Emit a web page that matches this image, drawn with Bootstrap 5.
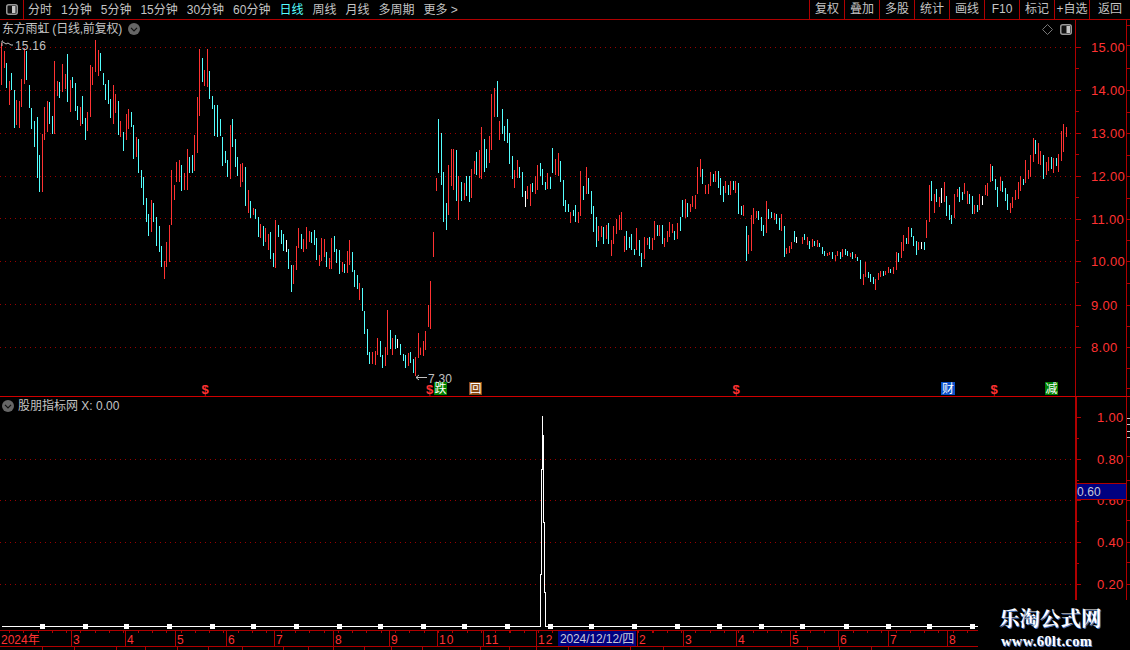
<!DOCTYPE html>
<html lang="zh">
<head>
<meta charset="utf-8">
<title>东方雨虹 日线</title>
<link href="https://cdn.jsdelivr.net/npm/bootstrap@5.3.0/dist/css/bootstrap.min.css" rel="stylesheet">
<style>
html,body{background:#000;margin:0;height:650px;overflow:hidden}
body{font-family:"Liberation Sans","Noto Sans CJK SC",sans-serif;font-size:12px;color:#c4c4c4;line-height:1;width:1130px;position:relative}
.tbar{height:20px;border-bottom:1px solid #b00000}
.tbar-icon{width:24px;border-right:1px solid #b00000}
.tbar-menu{gap:9px;padding-left:4px}
.tbar-on{color:#55ffff}
.tbar-cell{width:35px;border-left:1px solid #b00000;text-align:center;height:19px;line-height:19px}
.tbar-cell:last-child{width:41px}
.pane{position:relative;display:block}
.pane svg{display:block}
.pane-head{position:absolute;left:0;top:0;height:18px;gap:6px;padding-left:2px}
.pane-title{letter-spacing:-.2px}
.pane-low .pane-head{padding-left:2px;top:0;gap:4px}
.cgl{width:12px;height:12px;display:block}
.pane-tools{position:absolute;top:4px;left:1042px;gap:7px}
.xaxis{height:17px;width:978px;border-top:1px solid #b00000;border-bottom:1px solid #b00000;position:relative;overflow:hidden;background:#000 repeating-linear-gradient(90deg,#b00000 0 1px,transparent 1px 14.3px) 9px 0/100% 2px no-repeat}
.xcell{color:#ff3232;border-left:1px solid #b00000;padding:3px 0 0 1px;font-size:12px;letter-spacing:1px;height:15px;flex:none}
.xcell:first-child{border-left:0;padding-left:1px;letter-spacing:0}
.xdate{position:absolute;left:558px;top:0;width:78px;height:15px;background:#000080;color:#c8c8d8;font-size:12px;padding-top:2px;text-align:center;white-space:nowrap;letter-spacing:-.1px}
.stat{height:3px;width:978px;overflow:hidden}
.stat-cell{border-left:1px solid #b00000;height:3px;flex:none;overflow:hidden}
.logo{position:absolute;left:978px;top:600px;width:152px;height:50px;background:#000;padding-top:8px;padding-left:21px;font-family:"Liberation Serif","Noto Serif CJK SC","Noto Sans CJK SC",serif;color:#fff;font-weight:700}
.logo-a{font-size:20.5px;text-shadow:1px 1px 0 #4a78c8;line-height:23px;white-space:nowrap}
.logo-b{font-size:14.5px;letter-spacing:.35px;text-shadow:1px 1px 0 #4a78c8;line-height:16px;padding-top:2px;padding-left:2px;white-space:nowrap}
</style>
</head>
<body>
<div class="tbar d-flex">
  <div class="tbar-icon d-flex align-items-center justify-content-center">
    <svg width="12" height="11" viewBox="0 0 12 11"><rect x=".75" y=".75" width="10.5" height="9.5" rx="2" fill="#111" stroke="#999" stroke-width="1.5"/><rect x="6" y="2" width="3.5" height="7" fill="#c8c8c8"/></svg>
  </div>
  <div class="tbar-menu d-flex align-items-center flex-grow-1">
    <span>分时</span><span>1分钟</span><span>5分钟</span><span>15分钟</span><span>30分钟</span><span>60分钟</span><span class="tbar-on">日线</span><span>周线</span><span>月线</span><span>多周期</span><span>更多 &gt;</span>
  </div>
  <div class="d-flex">
    <div class="tbar-cell">复权</div><div class="tbar-cell">叠加</div><div class="tbar-cell">多股</div><div class="tbar-cell">统计</div><div class="tbar-cell">画线</div><div class="tbar-cell">F10</div><div class="tbar-cell">标记</div><div class="tbar-cell">+自选</div><div class="tbar-cell">返回</div>
  </div>
</div>

<div class="pane">
  <svg id="up" width="1130" height="377" viewBox="0 20 1130 377"></svg>
  <div class="pane-head d-flex align-items-center">
    <span class="pane-title">东方雨虹 (日线,前复权)</span>
    <svg class="cgl" viewBox="0 0 12 12"><circle cx="6" cy="6" r="6" fill="#666"/><path d="M3 4.8l3 3 3-3" fill="none" stroke="#111" stroke-width="1.2"/></svg>
  </div>
  <div class="pane-tools d-flex align-items-center">
    <svg width="11" height="11" viewBox="0 0 11 11"><path d="M5.5.5l5 5-5 5-5-5z" fill="none" stroke="#777"/></svg>
    <svg width="12" height="11" viewBox="0 0 12 11"><rect x=".75" y=".75" width="10.5" height="9.5" rx="2" fill="#111" stroke="#999" stroke-width="1.5"/><rect x="6.5" y="2" width="3.5" height="7" fill="#c8c8c8"/></svg>
  </div>
</div>

<div class="pane pane-low">
  <svg id="lo" width="1130" height="233" viewBox="0 397 1130 233"></svg>
  <div class="pane-head d-flex align-items-center">
    <svg class="cgl" viewBox="0 0 12 12"><circle cx="6" cy="6" r="6" fill="#666"/><path d="M3 4.8l3 3 3-3" fill="none" stroke="#111" stroke-width="1.2"/></svg>
    <span>股朋指标网 X: 0.00</span>
  </div>
</div>

<div class="xaxis d-flex" id="xa"></div>
<div class="stat d-flex" id="st"></div>

<div class="logo">
  <div class="logo-a">乐淘公式网</div>
  <div class="logo-b">www.60lt.com</div>
</div>

<script>
var NS='http://www.w3.org/2000/svg';
function el(p,n,a,t){var e=document.createElementNS(NS,n);for(var k in a)e.setAttribute(k,a[k]);if(t)e.textContent=t;p.appendChild(e);return e}
function seg(x1,y1,x2,y2,c,w){return el(up0,'line',{x1:x1,y1:y1,x2:x2,y2:y2,stroke:c,'stroke-width':w||1})}
var up0=document.getElementById('up'),lo=document.getElementById('lo');
var RED='#b00000',UPC='#ff3232',DN='#54ffff';
var S=[
[0,40,"4r10-135 13r33-85 19c68-145 28r122-195 34c98-150 43c150-264 49r180-255 58r183-264 64r117-200 73r25-133 79c33-120 88c135-205 94c204-267 103c243-321 112c231-414 118c345-456 127r282-456 133r201-300 142r183-276 148c186-252 157c228-282 163r63-282 172r123-168 178c126-174 187r72-156 196r102-147 202c42-186 211r120-216 217c111-144 226c129-213 232c198-240 241r201-258 247c168-252 256c234-300 262r216-273 271r75-231 277r81-135 286r0-96 295r30-108 301c39-93 310c99-135 316c132-180 325c120-192 331c177-234 340r135-252 346r162-219 355c183-285 361r243-291 370c276-333 379r222-300 385r207-267 394c216-261 400c255-357 409r291-351 415c297-399 424c390-444 430c411-495 439c474-546 445c522-588 454r480-576 460c489-546 469c531-618 478c558-636 484c618-681 493r663-717 499r606-681 508r555-666 514r390-555 523r435-480 529r366-426 538r360-426 544c375-453 553r399-450 562r327-450 568c351-399 577c345-399 583r285-393 592r171-339 598r27-228 607c54-126 613r90-138 622r27-141 628c93-177 637c168-207 643c195-288 652c195-291 661c237-288 667c291-378 676c333-369 682c360-411 691r255-417 697c237-321 706c297-381 712c351-408 721r372-441 727r369-426 736c381-498 745r450-519 751c483-534 760r504-526 766c507-537 775c531-591"],
[260,80,"1r432-474 10c438-498 16r444-486 25r462-510 31c456-537 40c519-561 46r420-564 55c435-471 64c450-492 70c462-513 79w480-516 85c507-567 94c555-636 100r555-612 109r498-570 115r444-504 124c462-507 130r477-516 139r441-507 148r453-486 154c456-489 163c450-495 169c474-540 178r525-558 184r474-543 193r477-531 199c516-561 208r534-567 214r474-567 223c468-516 229c507-549 238c510-582 247r546-576 253c552-579 262r513-579 268r480-555 277c516-576 283c570-621 292c585-627 298r609-660 307c624-693 313c693-762 322c747-825 328c816-852 337r816-852 346r813-855 352r774-825 361c783-831 367c825-864 376r801-858 382r690-825 391c750-807 397r774-825 406c765-807 412w777-804 421c792-825 430c822-843 436c825-864 445r819-858 451c816-849 460c837-879 466r831-888 475r759-834 481r804-825 490r783-828 496r753-810 505r675-741 511r603-747 520r456-531 529r294-333 535c117-279 544c159-315 550c276-426 559c369-450 565r255-405 574r207-318 580r207-330 589c210-363 595r288-420 604c306-363 613r309-360 619c288-348 628c288-366 634r267-354 643r243-282 649c216-285 658r210-294 664r141-297 673c177-276 679c207-264 688r168-249 694r42-210 703r24-111 712c3-111 718r123-180 727c87-162 733c138-183 742c117-189 748c159-252 757c228-297 763r270-324 772r240-294 778c261-294"],
[520,130,"7c126-201 16w183-231 22r168-207 31r162-228 37c159-186 46r138-192 52r105-180 61c99-138 67c117-165 76c156-180 82r129-177 91c141-177 97c54-129 106r87-135 115r69-138 121c93-156 130c150-228 136c210-246 145c222-246 151r246-279 160c240-258 166c225-276 175r246-279 181r123-258 190c168-210 199r111-192 205c144-192 214c183-252 220c228-306 229c261-351 235r288-333 244r288-321 250c291-342 259r285-327 265c279-342 274r330-378 280r288-342 289r267-312 298r255-300 304r246-300 313r318-366 319c303-360 328c321-354 334c312-360 343c357-375 349r294-360 358c330-378 364c369-411 373r321-387 382r324-345 388c321-357 397r324-360 403r273-330 412c285-318 418r285-318 427c285-342 433r324-351 442r303-336 448r276-321 457r282-309 463c303-330 472r279-327 481c261-303 487c210-261 496r207-264 502c219-261 511r222-246 517r198-231 526r195-237 532r111-192 541r87-141 547c117-162 556r165-192 565r162-192 571r126-168 580c132-156 586r123-156 595c123-174 601c144-195 610c168-216 616r153-189 625c165-195 631r153-195 640c153-180 646r153-189 655c159-252 664c228-255 670r225-258 679c288-393 685r315-372 694r255-363 700r234-282 709r243-264 715c243-270 724c261-303 730c285-318 739r213-309 745c237-267 754c246-264 763r249-270 769c252-282 778c264-300 784r252-303 793c288-381 799r354-372 808r348-369 814r336-357 823c303-336 829w321-339"],
[800,110,"7r381-402 13c372-390 22r381-405 28c393-417 37r387-411 43c393-408 52r390-411 58c399-411 67c411-432 73c423-438 82r429-438 88r426-435 97c426-447 106r435-453 112r423-438 121c426-447 127r417-441 136c417-435 142c423-438 151r429-441 157c426-447 166r432-444 172c441-453 181c450-507 190r492-525 196r456-501 205c486-504 211c492-516 220c501-522 226r507-540 235r489-510 241r483-501 250c483-498 256r483-495 265r471-489 271c477-489 280r471-492 289r426-480 295c429-456 304r396-444 310r375-423 319c384-402 325r351-402 334c354-381 340c378-408 349c393-435 355r396-420 364w396-417 373c396-420 379r330-384 388r225-336 394c213-273 403r252-309 409c237-276 418r261-291 424w234-279 433r216-276 439c258-318 448c285-330 454c315-342 463r252-324 472r237-261 478c231-276 487c246-270 493r219-252 502r243-282 508c252-282 517c258-312 523r285-312 532c285-306 538r252-300 547w258-285 556r225-255 562r219-258 571r162-216 577c168-213 586c207-240 592c231-291 601r201-243 607c213-246 616c234-273 622c252-300 631r279-309 637r261-294 646r240-270 655r216-267 661r198-243 670c207-225 676r150-219 685r180-207 691r135-201 700r84-156 706c90-132 715r99-162 721r123-165 730c135-207 739r156-195 745r141-183 754c141-177 760r144-189 769c144-168 775r132-186 784r63-153 790r42-126 799r51-81"]
];
function dotted(p,y,x2){el(p,'line',{x1:0,y1:y+.5,x2:x2,y2:y+.5,stroke:'#990000','stroke-width':1,'stroke-dasharray':'1 4'})}
function lab(p,x,y,t,c,extra){var a={x:x,y:y,fill:c,'font-size':13,'font-family':'"Liberation Sans",sans-serif','letter-spacing':'.3'};for(var k in extra)a[k]=extra[k];return el(p,'text',a,t)}

/* upper pane */
[47,90,133,176,218,261,304,347].forEach(function(y){dotted(up0,y,1075)});
S.forEach(function(s){
  s[2].split(' ').forEach(function(b){
    var m=b.match(/^(\d+)([rcw])(\d+)-(\d+)$/);
    var x=s[0]+Math.floor(+m[1]/3)+.5,t=s[1]+(+m[3])/3,bt=s[1]+(+m[4])/3;
    seg(x,Math.round(t),x,Math.round(bt),m[2]=='r'?UPC:m[2]=='c'?DN:'#ffffff');
  });
});
[[15,47],[14,90],[13,133],[12,176],[11,219],[10,261],[9,305],[8,347]].forEach(function(a){
  seg(1076,a[1]+.5,1081,a[1]+.5,RED);
  if(a[0]>8)seg(1076,a[1]+21.5,1079,a[1]+21.5,RED);
  lab(up0,1091,a[1]+5,a[0]+'.00',UPC);
});
seg(1075.5,20,1075.5,397,RED);
seg(1126.5,20,1126.5,397,RED);
[25,45,68,90,112,133,155,176,198,219,240,261,283,305,326,347,368,388].forEach(function(y){seg(1127,y+.5,1130,y+.5,RED)});
/* high / low flags */
el(up0,'path',{d:'M2 41h1M2 41v5M3 42l3 2 2-1 3 2h2',stroke:'#c0c0c0',fill:'none'});
lab(up0,15,50,'15.16','#c0c0c0',{'font-size':12,'letter-spacing':'.2'});
el(up0,'path',{d:'M427 377.5h-11M419 375l-3 2.5 3 2.5',stroke:'#c0c0c0',fill:'none'});
lab(up0,428,383,'7.30','#c0c0c0',{'font-size':12,'letter-spacing':'.2'});
/* signal marks */
[205,429.5,736,994].forEach(function(x){lab(up0,x,394,'$',UPC,{'font-size':13,'font-weight':700,'text-anchor':'middle','letter-spacing':0})});
function chip(x,w,bg,t,fg){el(up0,'rect',{x:x,y:382,width:w,height:13,fill:bg});
  el(up0,'text',{x:x+w/2,y:393,fill:fg||'#fff','font-size':12,'text-anchor':'middle','font-family':'"Noto Sans CJK SC",sans-serif'},t)}
chip(434,13,'#008000','跌');
chip(469,13,'#8a4a14','回');
chip(941,14,'#0a50c8','财');
chip(1045,13,'#008000','减');
seg(0,396.5,1130,396.5,'#d00000');

/* lower pane */
up0=lo;
[459,500,542,584].forEach(function(y){dotted(lo,y,1075)});
[[1,417],[.8,459],[.6,500],[.4,542],[.2,584]].forEach(function(a){
  seg(1076,a[1]+.5,1081,a[1]+.5,RED);
  if(a[1]<584)seg(1076,a[1]+21.5,1079,a[1]+21.5,RED);
  lab(lo,1097,a[1]+5,a[0].toFixed(2),UPC);
});
seg(1075.5,397,1075.5,630,RED);seg(1076.5,397,1076.5,630,RED);
seg(1126.5,397,1126.5,630,RED);
[418,424,431,437,456,480,500,520,542,562,584].forEach(function(y){seg(1127,y+.5,1130,y+.5,y<440?'#c8c8c8':RED)});
el(lo,'rect',{x:1076.5,y:483.5,width:50,height:16,fill:'#000080',stroke:'#b00000'});
lab(lo,1077,496,'0.60','#c8c8d8',{'letter-spacing':'.1','font-size':12});
el(lo,'polyline',{points:'2,626.5 540.5,626.5 540.5,574 541.5,574 541.5,469 542.5,469 542.5,416 542.5,416 543.5,452 543.5,522 544.5,522 544.5,592 545.5,592 545.5,626.5 978,626.5',fill:'none',stroke:'#fff','stroke-width':1,'shape-rendering':'crispEdges'});
[42,85,126,169,212,253,296,339,380,423,464,507,550,591,634,677,719,761,802,846,888,929,972].forEach(function(x){
  el(lo,'rect',{x:x-2,y:624,width:5,height:5,fill:'#fff'});
});

/* x axis: cells flow left to right */
var cells=[['2024年',71],['3',54],['4',50],['5',51],['6',48],['7',59],['8',56],['9',48],['10',46],['11',53],['12',22],['',79],['2',46],['3',53],['4',54],['5',48],['6',50],['7',59],['8',30]];
var xa=document.getElementById('xa');
cells.forEach(function(c){var d=document.createElement('div');d.className='xcell';d.style.width=c[1]+'px';d.textContent=c[0];xa.appendChild(d)});
var dd=document.createElement('div');dd.className='xdate';dd.textContent='2024/12/12/四';xa.appendChild(dd);
/* bottom strip, only the first pixels of each cell show */
var st=document.getElementById('st'),edge=[0,42,74,116,145,177,208,242,283,308,333,364,391,422,480,509,536,568,630,663,807,839,871,978];
edge.slice(0,-1).forEach(function(x,i){var d=document.createElement('div');d.className='stat-cell';d.style.width=(edge[i+1]-x)+'px';if(i==0)d.style.borderLeft='0';st.appendChild(d)});
</script>
<script src="https://cdn.jsdelivr.net/npm/bootstrap@5.3.0/dist/js/bootstrap.bundle.min.js"></script>
</body>
</html>
